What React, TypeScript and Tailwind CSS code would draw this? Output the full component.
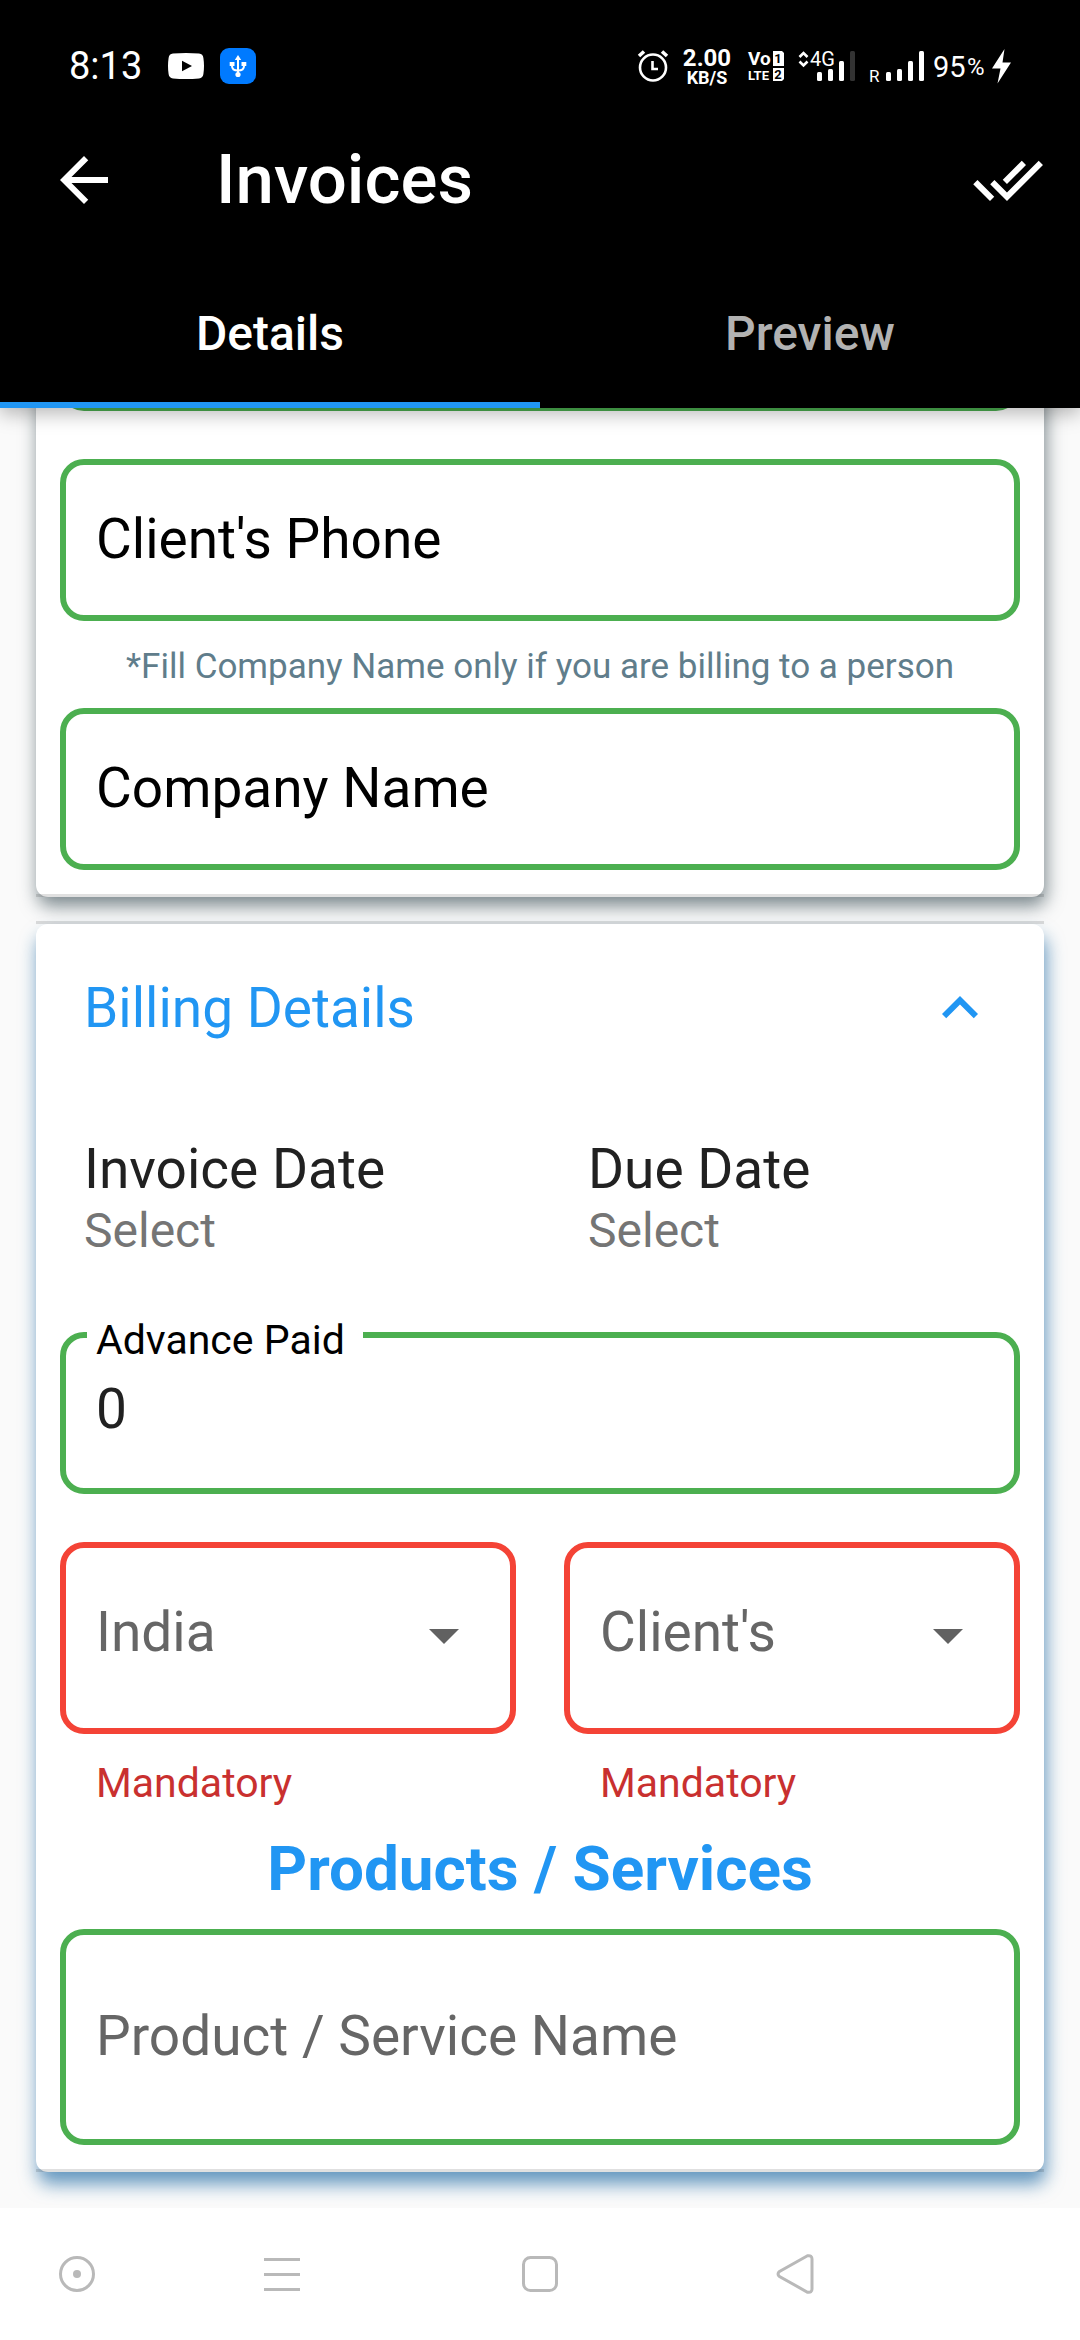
import { ReactNode, useState } from "react";
import { MdArrowBack, MdArrowDropDown, MdDoneAll, MdExpandLess } from "react-icons/md";

const FIELD =
  "block w-full rounded-[24px] border-[6px] border-[#4caf50] bg-white px-[30px] text-[55px] text-[#212121] outline-none";

function StatusBar() {
  return (
    <div className="flex h-24 items-end justify-between pl-[69px] pr-[69px]">
      <div className="flex h-[60px] items-center">
        <span className="w-[99px] text-[38px] leading-[44px]">8:13</span>
        <svg width="36" height="36" viewBox="0 0 36 36" aria-label="YouTube">
          <path d="M5 5.6Q18 4.4 31 5.6Q35 6 35.4 10Q36.6 18 35.4 26Q35 30 31 30.4Q18 31.6 5 30.4Q1 30 .6 26Q-.6 18 .6 10Q1 6 5 5.6Z" fill="#fff" />
          <path d="M14 12.8v10.4L24 18z" fill="#000" />
        </svg>
        <svg className="ml-4" width="36" height="36" viewBox="0 0 36 36" aria-label="USB">
          <rect width="36" height="36" rx="9" fill="#007aff" />
          <g fill="none" stroke="#fff" strokeWidth="2">
            <path d="M18 11v15M12 16v2q0 4.500 6 4.500M24 16v2q0 4.500-6 4.500" />
          </g>
          <path d="M18 7l3.200 5h-6.400zM9.700 14h4.800v4h-4.800zM21.500 14h4.800v4h-4.800z" fill="#fff" />
          <circle cx="18" cy="26.500" r="2.600" fill="#fff" />
        </svg>
      </div>
      <svg className="h-[60px] w-[374px] font-['Roboto']" viewBox="637 36 374 60" fill="#fff" aria-label="Device status">
        <g fill="none" stroke="#fff">
          <circle cx="653" cy="67.500" r="13" strokeWidth="2.600" />
          <path d="M639 56l5-4.500M667 56l-5-4.500" strokeWidth="3.600" />
          <path d="M652.500 61v8h5.500" strokeWidth="2.600" />
        </g>
        <text x="707" y="66" fontSize="24" fontWeight="700" textAnchor="middle">2.00</text>
        <text x="707" y="84" fontSize="18" fontWeight="700" textAnchor="middle">KB/S</text>
        <text x="748" y="65" fontSize="19" fontWeight="700">Vo</text>
        <text x="748" y="80" fontSize="13" fontWeight="700">LTE</text>
        <path d="M773 51h9l2 2v13h-11zM773 68h11v11l-2 2h-9z" />
        <text x="778" y="63" fontSize="13" fontWeight="700" fill="#000" textAnchor="middle">1</text>
        <text x="778" y="79" fontSize="13" fontWeight="700" fill="#000" textAnchor="middle">2</text>
        <path d="M799.500 57l4-4 4 4M799.500 61.500l4 4 4-4" fill="none" stroke="#fff" strokeWidth="2.600" />
        <text x="810" y="66" fontSize="20">4G</text>
        <rect x="817" y="72" width="5" height="9" rx="1.500" />
        <rect x="828" y="69" width="5" height="12" rx="1.500" />
        <rect x="839" y="61" width="5" height="20" rx="1.500" />
        <rect x="850" y="51" width="5" height="30" rx="1.500" fill="#333" />
        <text x="869" y="82" fontSize="17">R</text>
        <rect x="886" y="72" width="5" height="9" rx="1.500" />
        <rect x="897" y="69" width="5" height="12" rx="1.500" />
        <rect x="908" y="61" width="5" height="20" rx="1.500" />
        <rect x="919" y="51" width="5" height="30" rx="1.500" />
        <text x="933" y="77" fontSize="29">95</text>
        <text x="967" y="75" fontSize="24">%</text>
        <path d="M1004.500 49L992 68.500h8.500L997.500 83.500 1011 62.500h-8.500z" />
      </svg>
    </div>
  );
}

function Rule() {
  return <div className="h-[3px] bg-black/12" />;
}

function SelectField({ label, options }: { label: string; options: string[] }) {
  return (
    <div>
      <div className="relative">
        <select
          aria-label={label}
          defaultValue={options[0]}
          className="block h-48 w-full appearance-none rounded-[24px] border-[6px] border-[#f44336] bg-white pb-3 pl-[30px] pr-24 text-[55px] text-[#666666] outline-none"
        >
          {options.map((o) => (
            <option key={o}>{o}</option>
          ))}
        </select>
        <MdArrowDropDown className="pointer-events-none absolute inset-y-0 right-9 my-auto size-[72px] -translate-y-[3px] text-[#616161]" />
      </div>
      <p className="mt-[25px] pl-9 text-[41px] leading-[48px] text-[#c9302f]">Mandatory</p>
    </div>
  );
}

function DateButton({ label }: { label: string }) {
  return (
    <button type="button" className="pl-12 text-left">
      <span className="block text-[55px] leading-[66px] text-[#212121]">{label}</span>
      <span className="block text-[48px] leading-[58px] text-[#757575]">Select</span>
    </button>
  );
}

function NavButton({ label, children }: { label: string; children: ReactNode }) {
  return (
    <button type="button" aria-label={label} className="flex items-center justify-center">
      <svg width="42" height="42" viewBox="0 0 42 42" fill="none" stroke="#b9b9b9" strokeWidth="3">
        {children}
      </svg>
    </button>
  );
}

export default function App() {
  const [tab, setTab] = useState("Details");
  return (
    <div className="flex min-h-screen flex-col bg-[#fafafa] font-['Roboto',sans-serif]">
      <header className="relative z-10 bg-black text-white shadow-[0_6px_18px_rgba(0,0,0,0.28)]">
        <StatusBar />
        <div className="flex h-[168px] items-center pl-12 pr-9">
          <button type="button" aria-label="Back">
            <MdArrowBack className="size-[72px]" />
          </button>
          <h1 className="ml-24 flex-1 text-[69px] font-medium leading-[82px]">Invoices</h1>
          <button type="button" aria-label="Save">
            <MdDoneAll className="size-[72px]" />
          </button>
        </div>
        <div role="tablist" className="grid grid-cols-2">
          {["Details", "Preview"].map((name) => (
            <button
              key={name}
              type="button"
              role="tab"
              aria-selected={tab === name}
              onClick={() => setTab(name)}
              className="h-36 border-b-[6px] border-black pt-0.5 text-[48px] font-medium text-[#b2b2b2] aria-selected:border-[#2196f3] aria-selected:text-white"
            >
              {name}
            </button>
          ))}
        </div>
      </header>

      <main className="flex-1 overflow-hidden px-9 pb-9">
        <section className="rounded-b-[12px] bg-white shadow-[2px_9px_18px_rgba(38,60,68,0.6)]">
          <div className="px-6 pb-6">
            <input aria-label="Client's Email" className={`${FIELD} -mt-[159px] h-[162px]`} />
            <input aria-label="Client's Phone" placeholder="Client's Phone" className={`${FIELD} mt-12 h-[162px] pb-0.5 placeholder:text-black`} />
            <p className="mb-4 mt-[21px] text-center text-[35px] leading-[50px] text-[#607d8b]">
              *Fill Company Name only if you are billing to a person
            </p>
            <input aria-label="Company Name" placeholder="Company Name" className={`${FIELD} h-[162px] pb-0.5 placeholder:text-black`} />
          </div>
          <Rule />
        </section>

        <section className="mt-6">
          <Rule />
          <div className="rounded-[12px] bg-white shadow-[2px_12px_18px_rgba(20,98,160,0.65)]">
            <button type="button" aria-expanded="true" className="flex h-[168px] w-full items-center justify-between px-12 text-[#2196f3]">
              <span className="text-[55px] leading-[66px]">Billing Details</span>
              <MdExpandLess className="size-[72px]" />
            </button>
            <div className="mt-11 grid grid-cols-2">
              <DateButton label="Invoice Date" />
              <DateButton label="Due Date" />
            </div>
            <div className="px-6 pb-6 pt-[72px]">
              <div className="relative">
                <label htmlFor="advance" className="absolute -top-4 left-[27px] bg-white pl-[9px] pr-[18px] text-[41px] leading-[48px] text-black">
                  Advance Paid
                </label>
                <input id="advance" defaultValue="0" inputMode="decimal" className={`${FIELD} h-[162px] pb-2`} />
              </div>
              <div className="mt-12 grid grid-cols-2 gap-12">
                <SelectField label="Country" options={["India"]} />
                <SelectField label="Client's state" options={["Client's"]} />
              </div>
              <h2 className="mb-[22px] mt-6 text-center text-[62px] font-bold leading-[76px] text-[#2196f3]">Products / Services</h2>
              <input
                aria-label="Product / Service Name"
                placeholder="Product / Service Name"
                className={`${FIELD} h-[216px] pb-0.5 placeholder:text-[#666666]`}
              />
            </div>
            <Rule />
          </div>
        </section>
      </main>

      <nav className="relative grid h-[132px] grid-cols-[154fr_256fr_260fr_250fr_160fr] bg-white">
        <NavButton label="Assistant">
          <circle cx="21" cy="21" r="16.500" />
          <circle cx="21" cy="21" r="4" fill="#b9b9b9" stroke="none" />
        </NavButton>
        <NavButton label="Recent apps">
          <path d="M3 6.500h36M3 21.500h36M3 36.500h36" />
        </NavButton>
        <NavButton label="Home">
          <rect x="4.500" y="4.500" width="33" height="33" rx="7" />
        </NavButton>
        <NavButton label="Go back">
          <path d="M33.500 2.800L5.500 18.500Q2.500 21 5.500 23.500L33.500 39.200Q38 40 38 36V6Q38 2 33.500 2.800Z" />
        </NavButton>
      </nav>
    </div>
  );
}
